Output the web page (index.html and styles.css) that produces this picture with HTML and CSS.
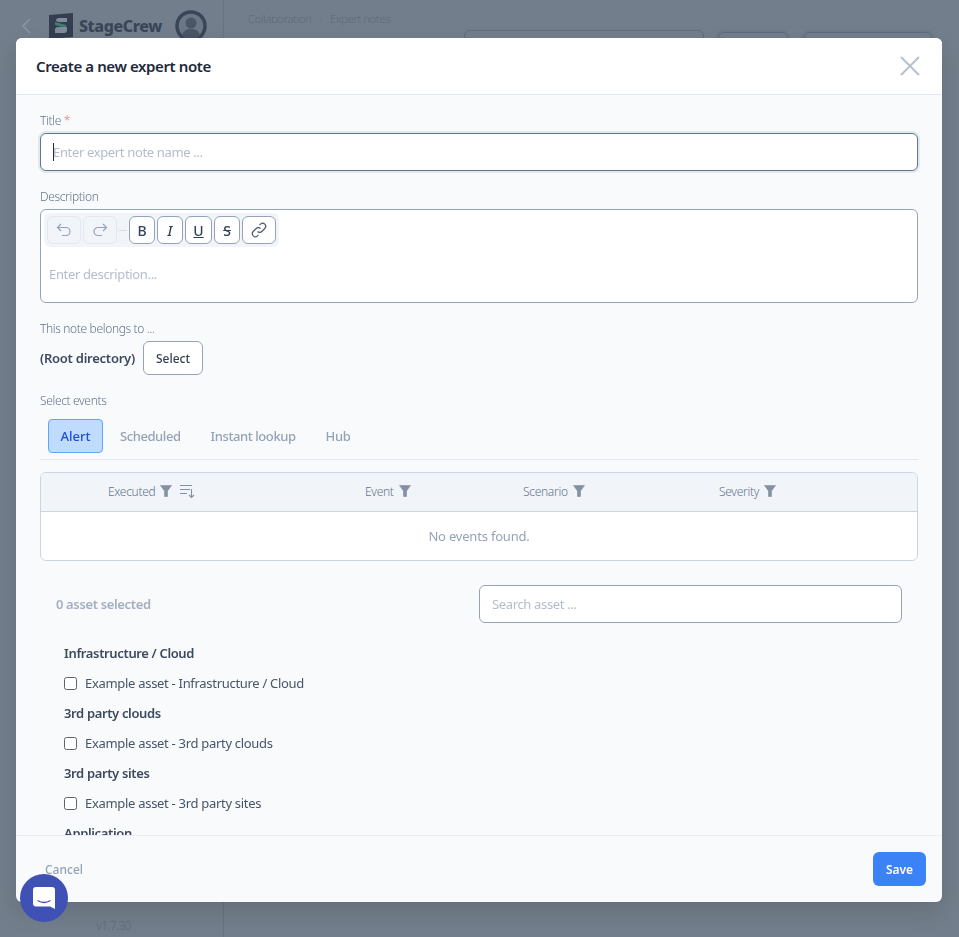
FILE: index.html
```html
<!DOCTYPE html>
<html lang="en">
<head>
<meta charset="utf-8">
<title>Create a new expert note</title>
<link rel="stylesheet" href="styles.css">
</head>
<body>
<div class="page">
  <aside class="side">
    <div class="brand">
      <svg class="chev" width="12" height="18" viewBox="0 0 12 18"><path d="M10 2 3 9l7 7" fill="none" stroke="#8a94a3" stroke-width="1.6"/></svg>
      <svg class="logo" width="26" height="26" viewBox="0 0 26 26"><path d="M1 2 25 0v24L1 26z" fill="#333f50"/><path d="M8 8c0-2 1-3 3-3h8v4h-8z" fill="#7f8b99"/><path d="M7 9l11 3v3L7 12z" fill="#3f7f72"/><path d="M7 17c0-2 1-3 3-3h9v3c0 2-1 3-3 3H7z" fill="#7f8b99"/></svg>
      <span class="brand-name">StageCrew</span>
      <svg class="avatar" width="32" height="32" viewBox="0 0 32 32"><circle cx="16" cy="16" r="14" fill="#6c7786" stroke="#3a4658" stroke-width="3.5"/><circle cx="16" cy="13" r="5.5" fill="#4a5666"/><path d="M7 26c1-6 5-7 9-7s8 1 9 7c-5 3.500-13 3.500-18 0z" fill="#4a5666"/></svg>
    </div>
    <div class="version">v1.7.30</div>
  </aside>
  <main class="main">
    <nav class="crumbs"><span>Collaboration</span><span class="sep">›</span><span>Expert notes</span></nav>
    <div class="tools"><span class="tool t1"></span><span class="tool t2"></span><span class="tool t3"></span></div>
  </main>
</div>

<div class="scrim">
  <section class="modal">
    <header class="m-head">
      <h1>Create a new expert note</h1>
      <svg class="close" width="20" height="20" viewBox="0 0 20 20"><path d="M1 1l18 18M19 1 1 19" fill="none" stroke="#b6c0cf" stroke-width="2"/></svg>
    </header>
    <div class="m-body">
      <label class="lbl lbl-title">Title <span class="req">*</span></label>
      <div class="input focus"><span class="caret"></span><span class="ph">Enter expert note name ...</span></div>

      <label class="lbl lbl-desc">Description</label>
      <div class="editor">
        <div class="toolbar">
          <span class="tb off"><svg width="18" height="18" viewBox="0 0 18 18"><path d="M6 3 2.500 6.500 6 10M3 6.500h8a4 4 0 0 1 0 8H7" fill="none" stroke="#94a3b8" stroke-width="1.200"/></svg></span>
          <span class="tb off"><svg width="18" height="18" viewBox="0 0 18 18"><path d="M12 3l3.500 3.500L12 10M15 6.500H7a4 4 0 0 0 0 8h4" fill="none" stroke="#94a3b8" stroke-width="1.200"/></svg></span>
          <span class="dash"></span>
          <span class="tb fmt b">B</span>
          <span class="tb fmt i">I</span>
          <span class="tb fmt u">U</span>
          <span class="tb fmt s">S</span>
          <span class="tb link"><svg width="18" height="18" viewBox="0 0 18 18"><g fill="none" stroke="#475569" stroke-width="1.100"><path d="M7.500 10.500a3 3 0 0 0 4.300 0l3-3a3 3 0 0 0-4.300-4.300L9.500 4.200"/><path d="M10.500 7.500a3 3 0 0 0-4.300 0l-3 3a3 3 0 0 0 4.300 4.300l1-1"/></g></svg></span>
        </div>
        <div class="ph ed-ph">Enter description...</div>
      </div>

      <label class="lbl lbl-belongs">This note belongs to ...</label>
      <div class="belongs"><strong>(Root directory)</strong><span class="btn-select">Select</span></div>

      <label class="lbl lbl-events">Select events</label>
      <div class="tabs">
        <span class="tab active">Alert</span>
        <span class="tab">Scheduled</span>
        <span class="tab">Instant lookup</span>
        <span class="tab">Hub</span>
      </div>

      <div class="table">
        <div class="thead">
          <span class="th">Executed <svg class="fun" viewBox="0 0 12 12"><path d="M.5.500h11L7.500 6v5.500h-3V6z"/></svg><svg class="sort" width="16" height="14" viewBox="0 0 16 14"><path d="M0 1.500h12M0 5.500h10M0 9.500h7M11.500 5v8.500M9 11l2.500 2.500L14 11" fill="none" stroke="#8490a3" stroke-width="1.100"/></svg></span>
          <span class="th">Event <svg class="fun" viewBox="0 0 12 12"><path d="M.5.500h11L7.500 6v5.500h-3V6z"/></svg></span>
          <span class="th">Scenario <svg class="fun" viewBox="0 0 12 12"><path d="M.5.500h11L7.500 6v5.500h-3V6z"/></svg></span>
          <span class="th">Severity <svg class="fun" viewBox="0 0 12 12"><path d="M.5.500h11L7.500 6v5.500h-3V6z"/></svg></span>
        </div>
        <div class="tempty">No events found.</div>
      </div>

      <div class="asset-bar">
        <span class="count">0 asset selected</span>
        <div class="input search"><span class="ph">Search asset ...</span></div>
      </div>

      <div class="assets">
        <h3>Infrastructure / Cloud</h3>
        <div class="row"><input type="checkbox"><span>Example asset - Infrastructure / Cloud</span></div>
        <h3>3rd party clouds</h3>
        <div class="row"><input type="checkbox"><span>Example asset - 3rd party clouds</span></div>
        <h3>3rd party sites</h3>
        <div class="row"><input type="checkbox"><span>Example asset - 3rd party sites</span></div>
        <h3>Application</h3>
      </div>
    </div>
    <footer class="m-foot">
      <span class="cancel">Cancel</span>
      <span class="save">Save</span>
    </footer>
  </section>
</div>

<div class="chat">
  <svg width="24" height="24" viewBox="0 0 24 24"><path d="M4 1h16a3 3 0 0 1 3 3v19l-5-2.500H4a3 3 0 0 1-3-3V4a3 3 0 0 1 3-3z" fill="#fff"/><path d="M5.500 14.500c4 2.500 9 2.500 13 0" fill="none" stroke="#3f51b5" stroke-width="1.400"/></svg>
</div>
</body>
</html>
```
FILE: styles.css
```css
* { box-sizing: border-box; }
html, body { margin: 0; height: 100%; overflow: hidden; }
body { font-family: "Noto Sans", "Open Sans", sans-serif; font-size: 14px; color: #334155; background: #737e8c; }

.page { display: flex; height: 937px; background: #737e8c; color: #5e6a7a; }
.side { width: 224px; border-right: 1px solid #68737f; display: flex; flex-direction: column; justify-content: space-between; padding: 10px 0 3px 20px; }
.brand { display: flex; align-items: center; }
.logo { margin-left: 16px; }
.brand-name { font-weight: 800; font-size: 16px; letter-spacing: -0.4px; color: #3a4658; margin-left: 5px; width: 96px; }
.version { font-size: 12px; font-weight: 300; text-align: center; margin-left: -16px; letter-spacing: -.6px; }
.main { flex: 1; padding: 11px 0 0 24px; }
.crumbs { display: flex; gap: 8px; font-size: 11.500px; font-weight: 300; letter-spacing: -.5px; color: #5e6a7a; line-height: 16px; }
.sep { color: #6b7684; }
.tools { display: flex; align-items: flex-start; margin: 3px 0 0 216px; }
.tool { height: 30px; border: 1px solid #5f6b80; border-radius: 6px; }
.t1 { width: 240px; }
.t2 { width: 70px; margin: 2px 0 0 14px; box-shadow: 0 0 0 2px #6d7888; }
.t3 { width: 128px; margin: 2px 0 0 16px; box-shadow: 0 0 0 2px #6d7888; }

.scrim { position: fixed; inset: 0; }
.modal { position: absolute; left: 16px; top: 38px; width: 926px; height: 864px; background: #f8fafc; border-radius: 6px; display: flex; flex-direction: column; overflow: hidden; box-shadow: 0 10px 25px rgba(0,0,0,.12); }
.m-head { flex: none; height: 57px; background: #fff; border-bottom: 1px solid #e2e8f0; display: flex; align-items: center; justify-content: space-between; padding: 0 22px 0 20px; }
.m-head h1 { margin: 0; font-size: 15px; font-weight: 600; color: #1e293b; letter-spacing: -.4px; }
.m-body { flex: 1; min-height: 0; overflow: hidden; padding: 0 24px; display: flex; flex-direction: column; }
.m-body > * { flex: none; }

.lbl { display: block; font-size: 12px; font-weight: 300; color: #64748b; letter-spacing: -.35px; line-height: 16px; }
.lbl-title { margin-top: 18px; }
.lbl-desc { margin-top: 18px; }
.lbl-belongs { margin-top: 18px; }
.lbl-events { margin-top: 18px; }
.req { color: #f87171; }

.input { height: 38px; border: 1px solid #94a3b8; border-radius: 6px; background: #fff; display: flex; align-items: center; padding-left: 12px; }
.focus { margin-top: 4px; border-color: #64748b; box-shadow: 0 0 0 2px #e2e8f0; }
.caret { width: 1px; height: 18px; background: #1e293b; margin-right: -1px; }
.ph { color: #b3bdcc; font-size: 13px; font-weight: 400; letter-spacing: -.35px; }

.editor { margin-top: 4px; height: 94px; border: 1px solid #94a3b8; border-radius: 6px; background: #fff; padding: 3px 0 0 3px; }
.toolbar { display: inline-flex; align-items: center; height: 34px; background: #f1f5f9; border-radius: 6px; padding: 0 3px 0 3px; gap: 2px; vertical-align: top; }
.tb { width: 26px; height: 28px; border: 1px solid #94a3b8; border-radius: 6px; background: #fff; display: flex; align-items: center; justify-content: center; font-size: 14px; font-weight: 500; color: #334155; }
.tb.off { width: 34px; border-color: #e2e8f0; background: #f1f5f9; }
.tb.link { width: 34px; }
.dash { width: 8px; height: 1px; background: #d5dce6; }
.fmt.i { font-style: italic; }
.fmt.u { text-decoration: underline; width: 27px; }
.fmt.s { text-decoration: line-through; }
.ed-ph { padding: 18px 0 0 5px; }

.belongs { display: flex; align-items: center; gap: 8px; margin-top: 4px; font-size: 13px; }
.belongs strong { width: 95px; white-space: nowrap; font-weight: 600; color: #3d4a5e; letter-spacing: -.25px; }
.btn-select { width: 60px; height: 34px; border: 1px solid #94a3b8; border-radius: 6px; background: #fff; display: flex; align-items: center; justify-content: center; font-size: 12px; font-weight: 500; color: #334155; }

.tabs { display: flex; margin-top: 2px; height: 49px; padding: 8px 0 6px 8px; border-bottom: 1px solid #e2e8f0; gap: 4px; }
.tab { height: 34px; padding: 0 13px; display: flex; align-items: center; font-size: 13px; font-weight: 500; color: #94a3b8; letter-spacing: -.42px; }
.tab.active { border: 1px solid #60a5fa; border-radius: 4px; background: #bfdbfe; color: #1d4ed8; padding: 0 12px; width: 55px; justify-content: center; letter-spacing: 0; }

.table { margin-top: 12px; height: 89px; border: 1px solid #cbd5e1; border-radius: 6px; background: #fff; overflow: hidden; }
.thead { height: 39px; background: #f1f5f9; border-bottom: 1px solid #cbd5e1; display: grid; grid-template-columns: 257px 158px 196px 1fr; padding: 0 0 2px 67px; align-items: center; }
.th { display: flex; align-items: center; gap: 5px; font-size: 12px; font-weight: 300; color: #64748b; letter-spacing: -.3px; }
.fun { width: 12px; height: 12px; fill: #8490a3; stroke: #8490a3; stroke-linejoin: round; stroke-width: .6; }
.sort { margin-left: 3px; }
.tempty { height: 49px; padding-bottom: 2px; display: flex; align-items: center; justify-content: center; font-size: 13px; color: #94a3b8; letter-spacing: -.2px; }

.asset-bar { display: flex; align-items: center; justify-content: space-between; margin-top: 24px; padding: 0 16px; }
.count { font-size: 13px; font-weight: 600; color: #a3afbf; letter-spacing: -.35px; }
.search { width: 423px; }

.assets { padding: 18px 0 0 24px; }
.assets h3 { margin: 0; height: 24px; line-height: 24px; font-size: 13px; font-weight: 600; color: #3d4a5e; letter-spacing: -.36px; }
.row { display: flex; align-items: center; height: 36px; font-size: 13px; font-weight: 400; color: #475569; letter-spacing: -.3px; }
.row input { width: 13px; height: 13px; margin: 0 8px 0 0; appearance: none; -webkit-appearance: none; border: 1px solid #5f6368; border-radius: 2.500px; background: #fff; }

.m-foot { flex: none; height: 67px; border-top: 1px solid #e9edf2; display: flex; align-items: center; justify-content: space-between; padding: 0 16px 0 29px; }
.cancel { font-size: 12px; font-weight: 500; color: #94a3b8; }
.save { width: 53px; height: 34px; background: #3b82f6; border-radius: 6px; color: #fff; font-size: 12px; font-weight: 600; display: flex; align-items: center; justify-content: center; }

.chat { position: fixed; left: 20px; top: 874px; width: 48px; height: 48px; border-radius: 50%; background: #3f51b5; display: flex; align-items: center; justify-content: center; }
```
